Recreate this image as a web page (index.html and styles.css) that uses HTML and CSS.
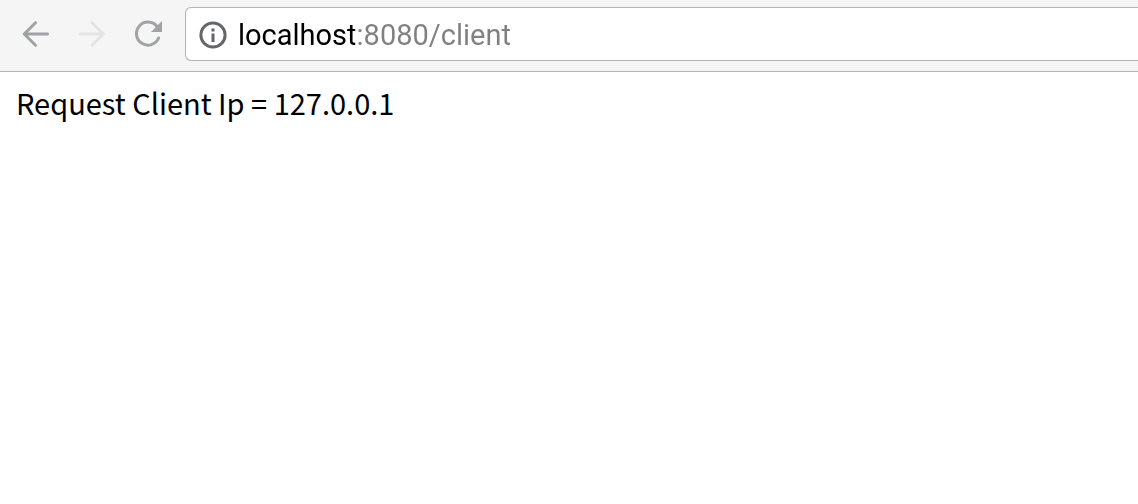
FILE: index.html
```html
<!DOCTYPE html>
<html lang="en">
<head>
<meta charset="utf-8">
<meta name="viewport" content="width=device-width, initial-scale=1">
<title>localhost:8080/client</title>
<link rel="stylesheet" href="styles.css">
</head>
<body>
<header class="toolbar">
  <nav class="controls" aria-label="Navigation">
    <button class="control" type="button" aria-label="Back">
      <svg class="icon" viewBox="0 0 28 28"><path d="M25.500 14H3M13.500 2.700 2.200 14 13.500 25.300"/></svg>
    </button>
    <button class="control" type="button" aria-label="Forward" disabled>
      <svg class="icon" viewBox="0 0 28 28"><path d="M2.500 14H25M14 2.700 25.300 14 14 25.300"/></svg>
    </button>
    <button class="control" type="button" aria-label="Reload">
      <svg class="icon" viewBox="0 0 28 28"><path d="M23 6.500A11.500 11.500 0 1 0 24.600 18"/><path class="solid" d="M28 1V12H17Z"/></svg>
    </button>
  </nav>
  <form class="address">
    <button class="site-info" type="button" aria-label="View site information">
      <svg class="icon" viewBox="0 0 28 28"><circle cx="14" cy="14" r="12.100"/><path class="solid" d="M12.500 7.500h3v3h-3zM12.500 12.500h3V21h-3z"/></svg>
    </button>
    <input class="url" type="text" aria-label="Address" value="localhost:8080/client" spellcheck="false">
  </form>
</header>
<main class="page">Request Client Ip = 127.0.0.1</main>
</body>
</html>
```
FILE: styles.css
```css
* {
  box-sizing: border-box;
}

body {
  margin: 0;
  background: #fff;
  color: #000;
}

.toolbar {
  display: flex;
  align-items: center;
  gap: 23px;
  padding: 7px 0 10px 22px;
  border-bottom: 1px solid #b3b3b3;
  background: #f5f5f5;
}

.controls {
  display: flex;
  gap: 28px;
}

.control,
.site-info {
  display: block;
  flex: none;
  padding: 0;
  border: 0;
  background: none;
  color: #a1a2a6;
}

.control:disabled {
  color: #e4e4e4;
}

.icon {
  display: block;
  width: 28px;
  height: 28px;
  fill: none;
  stroke: currentColor;
  stroke-width: 3;
  stroke-linecap: round;
  stroke-linejoin: round;
}

.solid {
  fill: currentColor;
  stroke: none;
}

.address {
  display: flex;
  flex: 1;
  align-items: center;
  gap: 11px;
  height: 54px;
  padding: 1px 0 0 13px;
  border: 1px solid #b3b3b3;
  border-right: 0;
  border-radius: 6px 0 0 6px;
  background: #fff;
}

.site-info {
  color: #64666b;
}

.url {
  flex: 1;
  min-width: 0;
  height: 40px;
  padding: 0;
  border: 0;
  outline: 0;
  background: linear-gradient(90deg, #000 117px, #808080 117px);
  -webkit-background-clip: text;
  background-clip: text;
  color: transparent;
  caret-color: #000;
  font: 29px/40px Roboto, sans-serif;
}

.page {
  padding: 10px 16px;
  font: 29px/40px "Noto Sans CJK KR", sans-serif;
}
```
